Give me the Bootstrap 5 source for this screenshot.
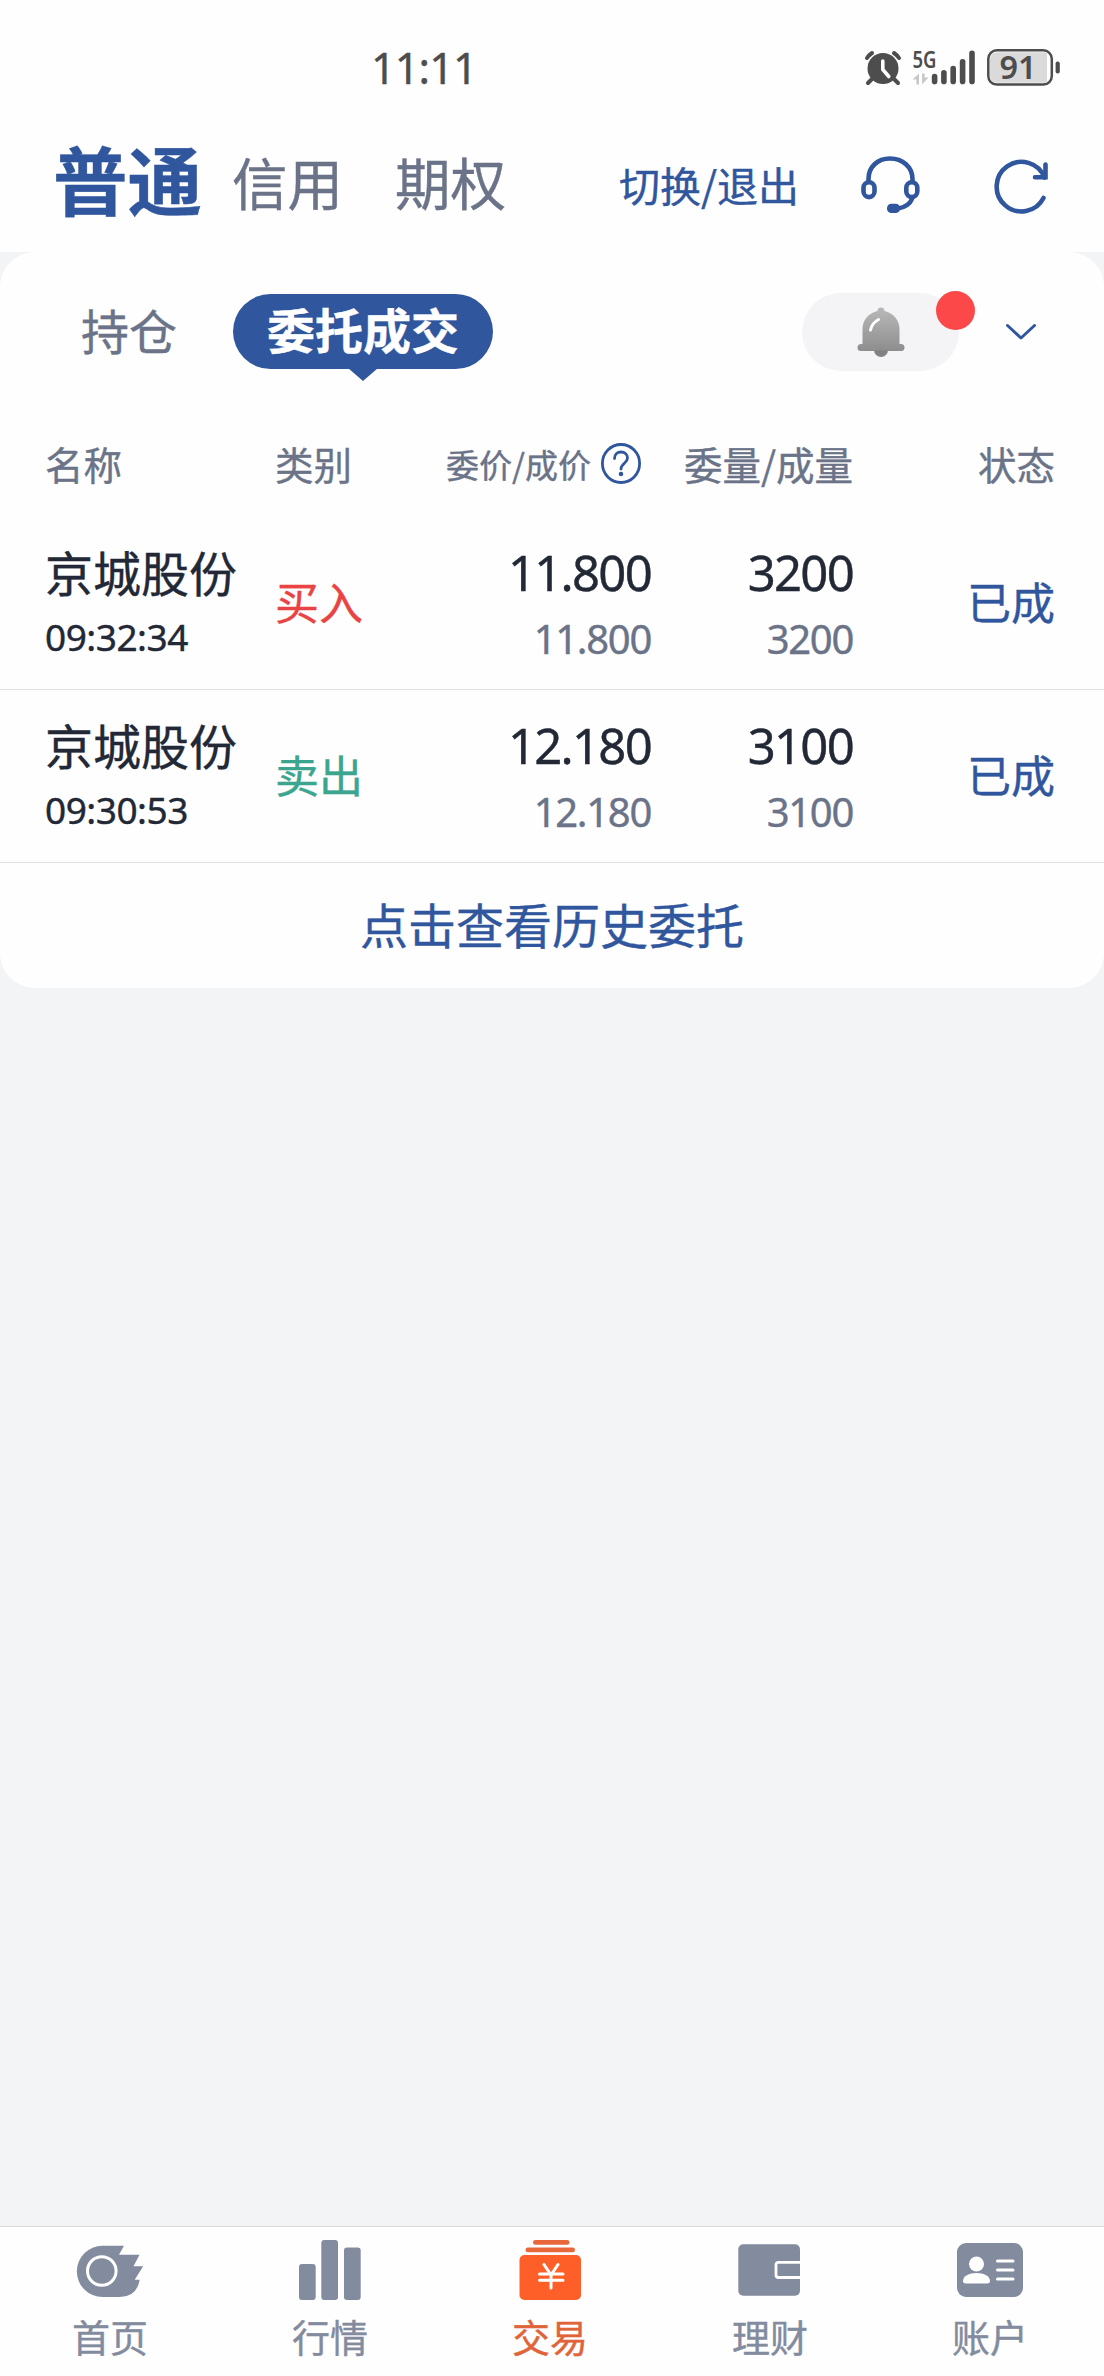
<!DOCTYPE html>
<html lang="zh-CN">
<head>
<meta charset="utf-8">
<meta name="viewport" content="width=device-width, initial-scale=1">
<title>委托成交</title>
<link href="https://cdn.jsdelivr.net/npm/bootstrap@5.3.0/dist/css/bootstrap.min.css" rel="stylesheet">
<style>
:root{--ink:#222835;--brand:#30569d;--muted-ink:#6a7388;--nav-ink:#838b9e;--hot:#fe5f29}
body{font-family:"Noto Sans CJK SC",sans-serif;background:#f3f4f6;color:var(--ink);line-height:1;min-height:2376px;-webkit-text-stroke:.4px}
svg{display:block;flex:none;-webkit-text-stroke:0}
a{text-decoration:none;color:inherit}
.num{font-family:"Noto Sans","Noto Sans CJK SC",sans-serif}
.brand-ink{color:var(--brand)}
.soft-ink{color:var(--muted-ink)}
.status-bar{height:136px;padding-left:371px;padding-right:44px}
.clock{font-size:43px;letter-spacing:-.8px;color:#4d4d4d;line-height:136px}
.app-head{height:116px;padding-left:53px;padding-right:54px}
.head-main{font-size:74.5px;font-weight:700;line-height:84px}
.head-alt{font-size:55.5px;line-height:90px}
.head-switch{font-size:41px;line-height:97px}
.panel-box{background:#fefefe;border-radius:35px}
.top-wrap{background:#fefefe}
.tab-row{height:159px;padding:41px 67px 0 81px}
.tab-plain{font-size:48px;line-height:72px}
.tab-pill{height:75px;width:260px;border-radius:38px;background:var(--brand);color:#fff;font-size:48px;font-weight:700;line-height:69px;margin-left:56px;margin-top:1px}
.tab-pill::after{content:"";position:absolute;left:50%;top:74px;margin-left:-15px;border:15px solid transparent;border-top:13px solid var(--brand);border-bottom:0}
.bell-pill{width:157px;height:78px;border-radius:39px;background:#f4f4f6}
.dot-red{position:absolute;width:39px;height:39px;border-radius:50%;background:#fc4848;right:-16px;top:-2px}
.grid-line{padding-left:45px;padding-right:49px}
.c-name{width:230px}.c-type{width:120px}.c-price{width:256px}.c-vol{width:202px}.c-state{width:202px}
.th-row{height:106px;font-size:38.5px;line-height:104px}
.th-price{font-size:33px}
.order-row{height:173px;border-bottom:1px solid #dfe0e2}
.stock{font-size:48px;line-height:60px;margin-top:-4px}
.stamp{font-size:37px;line-height:50px;margin-top:11px;letter-spacing:-.5px}
.v-big{font-size:49px;line-height:60px;letter-spacing:-1.7px}
.v-small{font-size:40px;line-height:50px;letter-spacing:-1.3px;margin-top:12px;color:var(--muted-ink)}
.side{font-size:44px;line-height:60px;margin-top:-4px}
.buy{color:#e94343}.sell{color:#3ca590}
.history{height:125px;font-size:48px;line-height:120px}
.tabbar{background:#fefefe;border-top:1px solid #dadbdd;height:150px;padding-right:4px}
.tabbar a{width:220px;color:var(--nav-ink);font-size:38px;line-height:50px}
.tabbar svg{margin-top:9px;margin-bottom:9px}
.tabbar a.hot{color:#e0643a}
</style>
</head>
<body class="d-flex flex-column">
<header class="top-wrap">
  <div class="status-bar d-flex align-items-center justify-content-between">
    <span class="clock num">11:11</span>
    <svg width="196" height="76" viewBox="864 30 196 76" fill="#4d4d4d">
      <circle cx="883" cy="68.500" r="15.500"/>
      <path d="M872 79l-4 4M894 79l4 4M867 58q2-3 5-5M899 58q-2-3-5-5" stroke="#4d4d4d" stroke-width="4" stroke-linecap="round" fill="none"/>
      <path d="M882.800 61v8.500l6 7" stroke="#fff" stroke-width="3.600" stroke-linecap="round" stroke-linejoin="round" fill="none"/>
      <text x="912.500" y="67.500" font-family="Noto Sans" font-size="23" font-weight="600" textLength="24" lengthAdjust="spacingAndGlyphs">5G</text>
      <path d="M912.500 79.500l6.500-6v11h-2.600v-5zM928.500 77.500h-3.900v-4h-2.600v11z" fill="#c8c8c8"/>
      <rect x="931.800" y="73.700" width="5.600" height="10.500" rx="2.800"/>
      <rect x="941.100" y="70" width="5.600" height="14.200" rx="2.800"/>
      <rect x="950.400" y="65.700" width="5.600" height="18.500" rx="2.800"/>
      <rect x="959.800" y="59" width="5.600" height="25.200" rx="2.800"/>
      <rect x="969.200" y="50.600" width="5.600" height="33.600" rx="2.800"/>
      <rect x="988.300" y="50.300" width="63.500" height="34.300" rx="8.500" fill="#fff" stroke="#4d4d4d" stroke-width="2.500"/>
      <path d="M997 52.200h50v30.500h-50a7 7 0 0 1-7-7V59.200a7 7 0 0 1 7-7z" fill="#dadada"/>
      <rect x="1055.600" y="61.500" width="4.200" height="12" rx="2"/>
      <text x="1018" y="78.800" text-anchor="middle" font-family="Noto Sans" font-size="32" font-weight="600" textLength="37" lengthAdjust="spacingAndGlyphs">91</text>
    </svg>
  </div>
  <div class="app-head d-flex align-items-start">
    <a href="#" class="head-main brand-ink">普通</a>
    <a href="#" class="head-alt soft-ink" style="margin-left:30px">信用</a>
    <a href="#" class="head-alt soft-ink" style="margin-left:52px">期权</a>
    <div class="d-flex align-items-start ms-auto brand-ink">
      <a href="#" class="head-switch">切换/退出</a>
      <svg style="margin:19px 0 0 61px" width="62" height="60" viewBox="860 155 62 60" fill="none" stroke="#30569d" stroke-width="4.600" stroke-linecap="round">
        <path d="M868.500 181v-2c0-12 9-20.500 21.500-20.500S912.500 167 912.500 179v2"/>
        <rect x="863.500" y="182.300" width="11" height="14.800" rx="5.500"/>
        <rect x="906.300" y="182.300" width="11" height="14.800" rx="5.500"/>
        <path d="M912 199q-3 7.500-14 9.500"/>
        <rect x="887" y="203.800" width="13" height="9.200" rx="4.300" fill="#30569d" stroke="none"/>
      </svg>
      <svg style="margin:22px 0 0 71px" width="57" height="57" viewBox="993 158 57 57" fill="none" stroke="#30569d" stroke-width="4.600" stroke-linecap="round">
        <path d="M1043.500 198a24.800 24.800 0 1 1 1-20.500"/>
        <path d="M1045.500 164.500v12.700h-10.500"/>
      </svg>
    </div>
  </div>
</header>
<main>
  <section class="panel-box">
    <div class="tab-row d-flex align-items-start">
      <a href="#" class="tab-plain soft-ink">持仓</a>
      <a href="#" class="tab-pill position-relative text-center">委托成交</a>
      <div class="bell-pill position-relative d-flex justify-content-center align-items-center ms-auto">
        <svg width="48" height="52" viewBox="0 0 48 52">
          <defs><linearGradient id="bellShade" x1="0" y1="0" x2="0" y2="1"><stop offset="0" stop-color="#b9b9ba"/><stop offset="1" stop-color="#8d8d8e"/></linearGradient></defs>
          <circle cx="24" cy="44" r="7" fill="#858585"/>
          <path d="M20.500 5a3.500 3.500 0 0 1 7 0c9 2 15 9 15 18v15H44a3.500 3.500 0 0 1 0 7H4a3.500 3.500 0 0 1 0-7h1.500V23c0-9 6-16 15-18z" fill="url(#bellShade)"/>
          <path d="M17.500 44.500h13a6.800 6.800 0 0 1-13 0z" fill="#808080"/>
          <path d="M13.500 24q1.500-7 8-10.500" stroke="#fff" stroke-width="3" stroke-linecap="round" fill="none"/>
        </svg>
        <span class="dot-red"></span>
      </div>
      <svg style="margin:30px 0 0 46px" width="32" height="18" viewBox="0 0 32 18" fill="none" stroke="#30569d" stroke-width="3" stroke-linecap="round" stroke-linejoin="round"><path d="M2.500 2.500L16 15L29.500 2.500"/></svg>
    </div>
    <div class="th-row grid-line d-flex soft-ink">
      <div class="c-name">名称</div>
      <div class="c-type">类别</div>
      <div class="c-price th-price d-flex justify-content-end align-items-center"><span>委价/成价</span>
        <svg style="margin:0 10px 1px 10px" width="40" height="41" viewBox="0 0 40 41" fill="none" stroke="#30569d" stroke-width="2.800" stroke-linecap="round"><ellipse cx="20" cy="20.500" rx="18.600" ry="19"/><path d="M13.500 15.500c0-4 2.800-6.500 6.500-6.500s6.500 2.500 6.500 6c0 5-6.500 5.500-6.500 11"/><circle cx="20" cy="31" r="2.300" fill="#30569d" stroke="none"/></svg>
      </div>
      <div class="c-vol text-end">委量/成量</div>
      <div class="c-state text-end">状态</div>
    </div>
    <div class="order-row grid-line d-flex align-items-center">
      <div class="c-name"><div class="stock">京城股份</div><div class="stamp num">09:32:34</div></div>
      <div class="c-type side buy">买入</div>
      <div class="c-price num text-end"><div class="v-big">11.800</div><div class="v-small">11.800</div></div>
      <div class="c-vol num text-end"><div class="v-big">3200</div><div class="v-small">3200</div></div>
      <div class="c-state side brand-ink text-end">已成</div>
    </div>
    <div class="order-row grid-line d-flex align-items-center">
      <div class="c-name"><div class="stock">京城股份</div><div class="stamp num">09:30:53</div></div>
      <div class="c-type side sell">卖出</div>
      <div class="c-price num text-end"><div class="v-big">12.180</div><div class="v-small">12.180</div></div>
      <div class="c-vol num text-end"><div class="v-big">3100</div><div class="v-small">3100</div></div>
      <div class="c-state side brand-ink text-end">已成</div>
    </div>
    <a href="#" class="history brand-ink d-block text-center">点击查看历史委托</a>
  </section>
</main>
<nav class="tabbar d-flex mt-auto">
  <a href="#" class="d-flex flex-column align-items-center">
    <svg width="70" height="66" viewBox="75 2236 70 66"><path fill="#838b9e" d="M102.500 2245.700h21.500l-5 9h20.500l-6 11.500h9.700l-8.500 13.500h5q-3 17.300-20 17.300h-17.200a25.600 25.600 0 0 1 0-51.300z"/><circle cx="101.800" cy="2271" r="14.300" fill="none" stroke="#fff" stroke-width="3"/></svg>首页</a>
  <a href="#" class="d-flex flex-column align-items-center">
    <svg width="70" height="66" viewBox="296 2236 70 66" fill="#838b9e"><rect x="300" y="2264" width="16.700" height="36" rx="3"/><rect x="322.300" y="2240" width="16.700" height="60" rx="3"/><rect x="345" y="2247.500" width="16.700" height="52.500" rx="3"/></svg>行情</a>
  <a href="#" class="hot d-flex flex-column align-items-center">
    <svg width="70" height="66" viewBox="515.500 2236 70 66"><g fill="#e8683c"><rect x="533.500" y="2240" width="36.500" height="4.800" rx="2.400"/><rect x="526" y="2247.500" width="49.500" height="4.800" rx="2.400"/></g><rect x="520" y="2255" width="61.500" height="45" rx="5" fill="#fe5f29"/><path d="M544.500 2264.500l7 10.500 7-10.500M551.500 2275v13M540 2274h23.500M540 2280.300h23.500" stroke="#fff" stroke-width="3" stroke-linecap="round" fill="none"/></svg>交易</a>
  <a href="#" class="d-flex flex-column align-items-center">
    <svg width="70" height="66" viewBox="735 2236 70 66"><rect x="738.300" y="2244.300" width="61.700" height="51.500" rx="5" fill="#838b9e"/><path d="M800 2262.300h-21.500q-2.500 0-2.500 2.500v10.200q0 2.500 2.500 2.500H800" fill="none" stroke="#fff" stroke-width="2.800"/></svg>理财</a>
  <a href="#" class="d-flex flex-column align-items-center">
    <svg width="70" height="66" viewBox="955 2236 70 66"><rect x="957" y="2243" width="66" height="54" rx="9" fill="#838b9e"/><g fill="#fff"><circle cx="976.500" cy="2264" r="7.500"/><path d="M963 2281c0-5 6-8 13.500-8s13.500 3 13.500 8q0 2.500-3 2.500h-21q-3 0-3-2.500z"/></g><path d="M997.500 2261h15.500M997.500 2270h15.500M997.500 2279h15.500" stroke="#fff" stroke-width="3" stroke-linecap="round"/></svg>账户</a>
</nav>
<script src="https://cdn.jsdelivr.net/npm/bootstrap@5.3.0/dist/js/bootstrap.bundle.min.js"></script>
</body>
</html>
